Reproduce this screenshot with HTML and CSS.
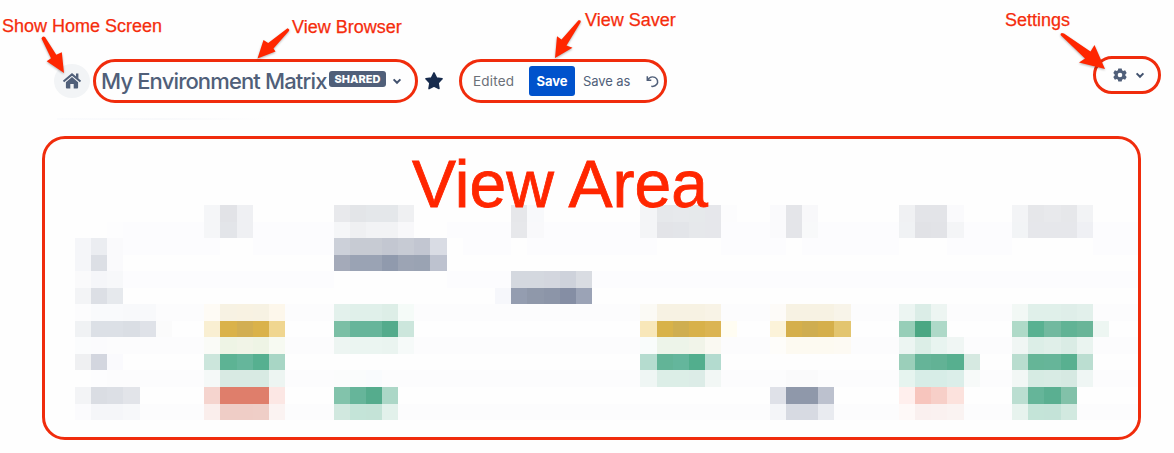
FILE: index.html
```html
<!DOCTYPE html>
<html lang="en">
<head>
<meta charset="utf-8">
<title>My Environment Matrix</title>
<link rel="stylesheet" href="styles.css">
</head>
<body>
<div class="page">
  <header class="toolbar">
    <button class="home" aria-label="Home">
      <svg width="20" height="16" viewBox="0 0 20 16">
        <path d="M1.500 8.400 10 1.400l8.500 7" fill="none" stroke="#505f79" stroke-width="2"/>
        <path d="M14 .5h2.400v5.300l-2.400-2z" fill="#505f79"/>
        <path d="M10 4.100 16.100 9.200V14.600q0 .9-.9.900H11.700V11H8.300v4.500H4.800q-.9 0-.9-.9V9.200z" fill="#505f79"/>
      </svg>
    </button>
    <div class="pill browser">
      <h1 class="title">My Environment Matrix</h1>
      <span class="badge">SHARED</span>
      <svg class="chevron" width="10" height="7" viewBox="0 0 10 7"><path d="M1.600 1.400 5 4.800 8.400 1.400" /></svg>
    </div>
    <svg class="star" width="20" height="20" viewBox="0 0 20 20"><path d="M10 1.900 12.500 6.900 18.100 7.800 14.100 11.900 15 17.600 10 15 5 17.600 5.900 11.900 1.900 7.800 7.500 6.900z" fill="#172b4d" stroke="#172b4d" stroke-width="1.500" stroke-linejoin="round"/></svg>
    <div class="pill saver">
      <span class="edited">Edited</span>
      <button class="save">Save</button>
      <span class="saveas">Save as</span>
      <svg class="undo" width="13" height="13" viewBox="0 0 13 13" fill="none" stroke="#505f79" stroke-width="1.500"><path d="M1.300 1.200V5.200H5.300"/><path d="M1.600 5C3.200 2.300 6.300 1.300 8.900 2.400 11.600 3.600 12.400 7 10.800 9.300 9.600 11 7.700 11.700 5.300 11.300"/></svg>
    </div>
    <div class="pill settings">
      <svg width="14" height="14" viewBox="0 0 14 14"><path fill="#505f79" fill-rule="evenodd" d="M5.300.4h3.400l.4 1.900 1.100.6 1.900-.6 1.600 2.800L12.300 6.400v1.200l1.400 1.300-1.600 2.800-1.900-.6-1.100.6-.4 1.900H5.300l-.4-1.900-1.100-.6-1.900.6L.3 8.900l1.400-1.300V6.400L.3 5.100l1.600-2.800 1.900.6 1.100-.6zM7 4.700a2.300 2.300 0 1 0 0 4.600 2.300 2.300 0 0 0 0-4.600z"/></svg>
      <svg class="chevron" width="10" height="7" viewBox="0 0 10 7"><path d="M1.600 1.400 5 4.800 8.400 1.400" /></svg>
    </div>
  </header>
  <div class="rule"></div>
  <main class="area">
    <div class="matrix" id="matrix"></div>
  </main>

  <svg class="arrows" width="1174" height="453" viewBox="0 0 1174 453">
    <path d="M41.500 38.500Q42.500 35.600 45 37L56.300 54.800 61.800 52.300 64 73 46.700 61.200 51 58.200z"/>
    <path d="M287.500 28.300Q290.500 29.500 288.500 31.500L273.500 48.500 275.500 51.500 257.500 58.500 263.500 40 268.200 43z"/>
    <path d="M578.500 20.300Q581.500 19.500 580.500 22.500L566.500 45.500 572.500 47.800 555 58 557 36.300 561.500 39.500z"/>
    <path d="M1060.500 35Q1060.500 31.800 1064 33.500L1090.500 51.500 1094.500 45 1105 69 1079 62.500 1085 58.500z"/>
  </svg>
  <span class="note note-home">Show Home Screen</span>
  <span class="note note-browser">View Browser</span>
  <span class="note note-saver">View Saver</span>
  <span class="note note-settings">Settings</span>
  <span class="note note-area">View Area</span>
</div>
<script src="matrix.js"></script>
</body>
</html>
```

FILE: styles.css
```css
* { box-sizing: border-box; }
body { margin: 0; background: #fefefe; font-family: Inter, "Liberation Sans", sans-serif; }
button { border: 0; padding: 0; font-family: inherit; }
.page { position: relative; width: 1174px; height: 453px; overflow: hidden; }

.toolbar { display: flex; align-items: flex-start; height: 118px; padding: 56px 13px 0 54px; }
.home { display: flex; align-items: center; justify-content: center; width: 36px; height: 34px; margin: 8px 3px 0 0; border-radius: 50%; background: #f2f4f6; }
.pill { display: flex; align-items: center; flex: none; border: 3px solid #f02c0c; border-radius: 22px; height: 44px; margin-top: 3px; white-space: nowrap; }
.browser { width: 325px; padding-left: 5px; }
.title { margin: 0; flex: none; width: 224px; font-size: 22px; line-height: 30px; font-weight: 500; letter-spacing: -0.850px; color: #505f79; }
.badge { flex: none; width: 57px; height: 16px; margin: -4px 0 0 4px; border-radius: 3px; background: #505f79; color: #fff; font-size: 11px; line-height: 16px; font-weight: 800; text-align: center; }
.chevron { flex: none; }
.chevron path { fill: none; stroke: #42526e; stroke-width: 2; }
.browser .chevron { margin: 1px 0 0 6px; }
.star { flex: none; margin: 15px 15px 0 6px; }
.saver { width: 208px; padding-left: 11px; }
.edited { flex: none; width: 56px; font-size: 13.500px; letter-spacing: .2px; color: #6b7078; }
.save { flex: none; width: 46px; height: 30px; border-radius: 3px; background: #0052cc; color: #fff; font-size: 13px; font-weight: 700; }
.saveas { flex: none; width: 71px; padding-left: 8px; font-size: 13px; letter-spacing: -.1px; color: #505f79; }
.undo { flex: none; }
.settings { width: 68px; height: 38px; margin: 0 0 0 auto; padding-left: 17px; }
.settings .chevron { margin-left: 8px; }
.rule { width: 210px; height: 2px; margin-left: 57px; background: linear-gradient(90deg, #fafbfd, #f8f9fb 50%, #fefefe); }

.area { width: 1099px; height: 304px; margin: 16px 0 0 42px; padding: 66px 0 0 30px; border: 3px solid #f02c0c; border-radius: 23px; }
.matrix { display: flex; flex-direction: column; width: 1063px; overflow: hidden; }
.row { display: grid; grid-template-columns: repeat(66, 16.160px); height: 16.550px; }

.arrows { position: absolute; left: 0; top: 0; fill: #ff2600; filter: drop-shadow(0 1px 1px rgba(0, 0, 0, .3)); }
.note { position: absolute; font-family: "Liberation Sans", Arial, sans-serif; font-size: 18px; line-height: 20px; color: #f52c0c; white-space: nowrap; -webkit-text-stroke: .25px #f52c0c; }
.note-home { left: 2px; top: 16px; }
.note-browser { left: 292px; top: 17px; }
.note-saver { left: 585px; top: 10px; }
.note-settings { left: 1005px; top: 10px; }
.note-area { left: 412px; top: 144px; font-size: 66px; line-height: 80px; color: #ff2600; -webkit-text-stroke: .8px #ff2600; }
```

FILE: matrix.js
```js
// Each row: background band, then runs of [first column, colour, colour, ...].
const rows = [
  ['', [8, '#f5f6f8', '#e2e3e7', '#eff0f3'], [16, '#e8e9ec', '#e3e5e8', '#e4e7ea', '#e4e7ea', '#eff0f2'], [27, '#e6e7ea', '#f8f9fb'], [35, '#f4f5f7', '#e6e8eb', '#e7e9ec', '#e6e9eb', '#e6e7eb', '#fcfcfd'], [43, '#fafafc', '#e4e5e9', '#f8f8fa'], [51, '#f0f1f3', '#e3e4e8', '#e3e4e8', '#fafafc'], [58, '#f3f4f6', '#e6e7ea', '#e8e9ec', '#e6e7ea', '#f2f3f5']],
  ['#fcfcfe', [0, '#fefefe', '#fefefe', '#fdfdfe'], [8, '#f5f6f8', '#e3e5e9', '#eff0f3'], [16, '#f5f6f8', '#eff0f2', '#f2f3f5', '#f2f3f5', '#f8f8fa'], [21, '#fefefe', '#fefefe'], [27, '#e7e8eb', '#f9f9fb'], [35, '#f4f5f7', '#e3e4e8', '#e3e5e9', '#e6e8eb', '#e6e7eb'], [43, '#fafafc', '#e4e5e9', '#f8f9fa'], [51, '#f0f2f4', '#e1e2e6', '#e2e3e7', '#f4f5f7'], [58, '#f2f4f6', '#e6e7eb', '#e6e7eb', '#e6e7eb', '#eff0f4']],
  ['#fcfcfe', [0, '#f5f6f9', '#ebedf1', '#fafafc'], [9, '#fefefe', '#fefefe'], [16, '#ccd0d9', '#c7cbd3', '#c7cbd3', '#c3c7d1', '#c7cbd4', '#c2c6d1', '#d9dce4'], [23, '#fefefe'], [27, '#fefefe'], [36, '#fefefe', '#fefefe', '#fefefe', '#fefefe'], [44, '#fefefe'], [51, '#fefefe', '#fefefe', '#fefefe'], [58, '#fefefe', '#fefefe', '#fefefe', '#fefefe', '#fefefe']],
  ['', [0, '#f5f6f9', '#dcdfe5', '#fafafc'], [16, '#a4aab9', '#9aa3b4', '#9aa3b4', '#909aad', '#9ca4b4', '#9aa3b3', '#bdc2cf']],
  ['#fcfcfe', [0, '#fafafb', '#f5f6f9', '#f7f8fa'], [16, '#fefefe', '#fefefe', '#fefefe', '#fefefe', '#fefefe', '#fefefe', '#fefefe'], [27, '#d4d8df', '#d4d8df', '#d3d6de', '#ced2db', '#d9dce2']],
  ['', [0, '#f3f4f6', '#dcdfe5', '#e6e9ed'], [26, '#f6f7fb'], [27, '#949db0', '#8f98aa', '#8c95a8', '#858ea4', '#9ba3b6']],
  ['#fcfcfd', [0, '#fcfcfd', '#f9fafc', '#f9fafc', '#f8f9fb', '#f8f9fb'], [8, '#fefbf5', '#f7f2e3', '#f8f2e2', '#f7f2e3', '#fdf7eb'], [16, '#e3f1ec', '#e0f0ea', '#e0f0ea', '#ddeee7', '#f5fbf8'], [35, '#fbfaf5', '#f7f2e3', '#f7f2e3', '#f7f2e3', '#f8f3e6'], [43, '#fdfbf8', '#f7f2e3', '#f7f2e3', '#f7f2e3', '#f8f4e9'], [51, '#ecf5f2', '#dbede7', '#edf5f2'], [58, '#f2f8f5', '#e0f0ea', '#e0f0ea', '#dfeee9', '#e2f0eb']],
  ['', [0, '#f0f2f4', '#dce0e6', '#dce0e6', '#dadee4', '#dfe2e8', '#fbfbfb'], [8, '#f9efd2', '#dab24a', '#d2ae52', '#dab24a', '#f0d690'], [16, '#7bbfa5', '#66b59a', '#66b59a', '#54ab8c', '#cce6dc'], [35, '#f8e7b9', '#d8b249', '#cfae50', '#d8b14a', '#dbb452', '#fffdf2'], [43, '#fcf3d9', '#d5af4b', '#cfad50', '#d5af4b', '#e3c56f'], [51, '#97ceb8', '#4ba783', '#aed9c8'], [58, '#afdac8', '#59b191', '#72b99f', '#61b395', '#69b598', '#edf6f2']],
  ['#fcfcfd', [0, '#fbfcfd', '#fbfbfd'], [8, '#fafbf7', '#eef4e5', '#f1f4e7', '#eef4e5', '#f7faf2'], [16, '#edf5f2', '#ebf5f1', '#ebf5f1', '#eaf4f0', '#f6faf9'], [35, '#f9fcfb', '#edf4e9', '#edf4e9', '#f1f4e9', '#faf9f2'], [43, '#fefdfa', '#fdfaf1', '#fdfaf1', '#fdfaf1', '#fdfaf3'], [51, '#ecf5f2', '#dceee7', '#e8f4f0', '#f0f6f4'], [58, '#f0f6f4', '#dceee7', '#e0efe9', '#daece5', '#eaf4f0']],
  ['', [0, '#eff0f2', '#d3d6df', '#fafafd'], [8, '#cce6dc', '#5db394', '#65b69b', '#56b090', '#a8d6c5'], [35, '#b5dccf', '#62b497', '#64b69c', '#52ae8d', '#b3dbcf'], [51, '#9bcfba', '#65b498', '#62b295', '#57af8f', '#d6e9e1'], [58, '#b9ddcf', '#65b597', '#66b599', '#58b090', '#bbded1']],
  ['#fcfcfd', [0, '#fefefe', '#fdfdfe'], [8, '#f5f9f8', '#d8eae3', '#d8eae3', '#d8eae3', '#edf5f2'], [16, '#fbfcfc', '#fafcfc', '#f9fbfd'], [35, '#eff6f4', '#dceee7', '#dceee7', '#dcece7', '#f2f7f5'], [44, '#fafafb', '#fafafb'], [51, '#e6f4ef', '#d7ede7', '#d7ede7', '#dbeee9', '#f7faf9'], [58, '#f2f7f5', '#d6ebe3', '#d8ebe4', '#d6e9e2', '#eff6f4']],
  ['', [0, '#f3f4f6', '#dadde3', '#dcdfe5', '#e2e4e9'], [8, '#f5d4ce', '#df7e6b', '#df7e6b', '#df7e6b', '#fce7e4'], [16, '#82c3ab', '#66b59a', '#55ac8d', '#acd7c7'], [43, '#dfe1e8', '#8f98aa', '#8f98aa', '#bcc1ce'], [51, '#ffefed', '#f7c5bd', '#f7cfc8', '#fce2dd'], [58, '#bbded1', '#65b599', '#5aaf91', '#82c1a9']],
  ['#fcfcfd', [0, '#fbfbfd', '#f5f6f9', '#f5f6f9', '#f7f8fa'], [8, '#faeeec', '#efcdc6', '#efcdc6', '#efcec7', '#fbf3f2'], [16, '#d1e8df', '#c4e4d8', '#c4e3d7', '#e2f1eb'], [43, '#f4f5f8', '#d7dae2', '#d7dae2', '#e9ebf0'], [51, '#fef9f8', '#faf0ef', '#faf1f0', '#faf3f2'], [58, '#e7f3ee', '#c4e4d8', '#c4e3d8', '#d2e9e0']]
];

const matrix = document.getElementById('matrix');
for (const [band, ...runs] of rows) {
  const row = document.createElement('div');
  row.className = 'row';
  const colours = new Array(66).fill(band);
  for (const [start, ...cells] of runs) {
    cells.forEach((colour, i) => { colours[start + i] = colour; });
  }
  for (const colour of colours) {
    const cell = document.createElement('span');
    if (colour) cell.style.background = colour;
    row.appendChild(cell);
  }
  matrix.appendChild(row);
}
```
